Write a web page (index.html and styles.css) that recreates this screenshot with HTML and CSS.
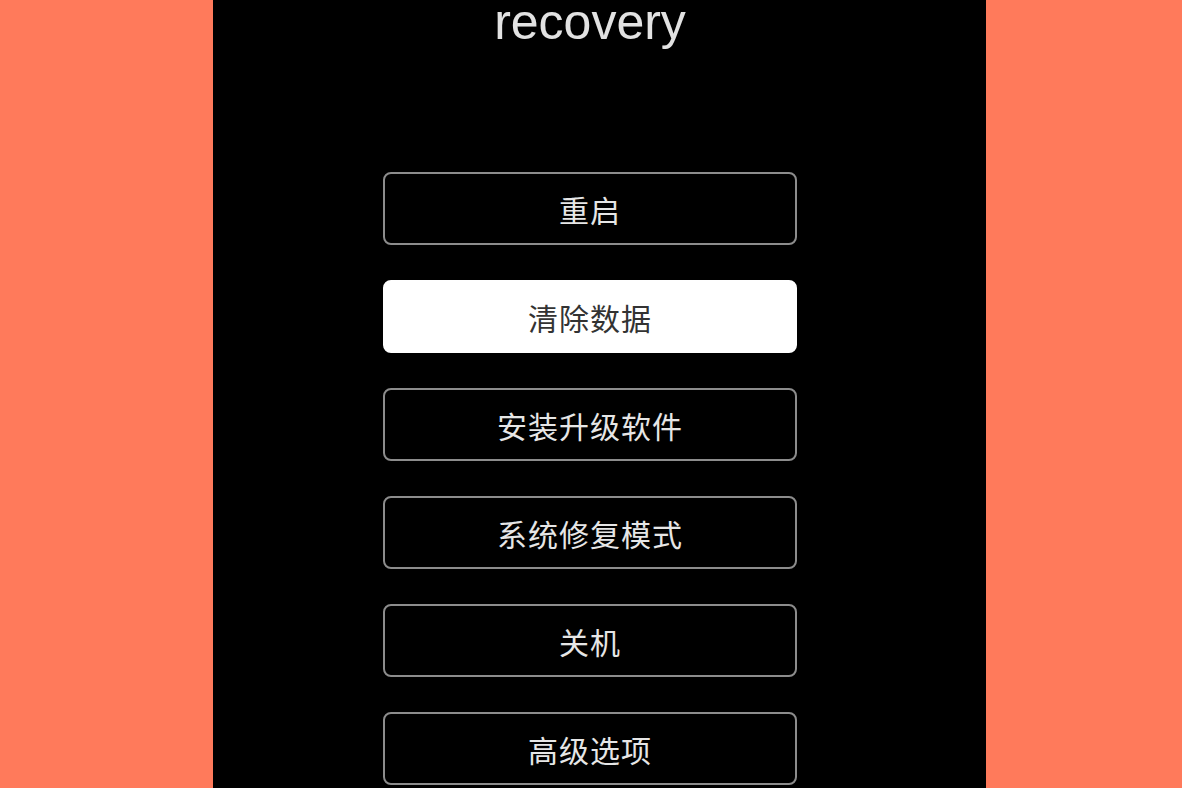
FILE: index.html
```html
<!DOCTYPE html>
<html lang="zh-CN">
<head>
    <meta charset="UTF-8">
    <meta name="viewport" content="width=device-width, initial-scale=1.0">
    <title>recovery</title>
    <link rel="stylesheet" href="styles.css">
</head>
<body>
    <div class="screen">
        <div class="menu">
            <h1 class="title">recovery</h1>
            <ul class="options">
                <li><button class="option">重启</button></li>
                <li><button class="option selected">清除数据</button></li>
                <li><button class="option">安装升级软件</button></li>
                <li><button class="option">系统修复模式</button></li>
                <li><button class="option">关机</button></li>
                <li><button class="option">高级选项</button></li>
            </ul>
        </div>
    </div>
</body>
</html>
```

FILE: styles.css
```css
html, body {
    margin: 0;
    height: 100%;
    overflow: hidden;
}

body {
    background-color: #ff7a5b;
    font-family: 'Noto Sans CJK SC', 'Liberation Sans', sans-serif;
}

.screen {
    margin-left: 213px;
    width: 773px;
    height: 100%;
    background-color: #000;
    padding-left: 170px;
    box-sizing: border-box;
}

.menu {
    width: 414px;
    display: flex;
    flex-direction: column;
    align-items: center;
}

.title {
    margin: 0;
    font-family: 'Liberation Sans', Arial, sans-serif;
    font-weight: normal;
    font-size: 50px;
    line-height: 44px;
    color: #e2e2e2;
}

.options {
    list-style: none;
    margin: 128px 0 0;
    padding: 0;
    width: 100%;
    display: flex;
    flex-direction: column;
    gap: 35px;
}

.option {
    display: block;
    width: 100%;
    height: 73px;
    background-color: #000;
    border: 2px solid #8c8c8c;
    border-radius: 8px;
    color: #e6e6e6;
    font-family: 'Noto Sans CJK SC', sans-serif;
    font-size: 30px;
    letter-spacing: 1px;
    cursor: pointer;
}

.option.selected {
    background-color: #fff;
    border-color: #fff;
    color: #333;
}
```
